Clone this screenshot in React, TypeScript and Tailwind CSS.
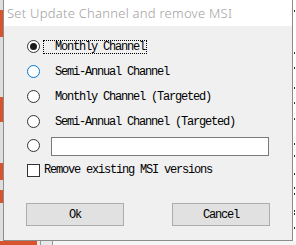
import React from "react";

const mono = { fontFamily: '"Liberation Mono", "Courier New", monospace' };

function Radio({ selected, hover }: { selected?: boolean; hover?: boolean }) {
  return (
    <div
      className={`w-[13px] h-[13px] rounded-full border bg-white flex items-center justify-center shrink-0 ${
        hover ? "border-[#0078d7]" : "border-[#333333]"
      }`}
    >
      {selected && <div className="w-[7px] h-[7px] rounded-full bg-[#1a1a1a]" />}
    </div>
  );
}

function RadioRow({ label, selected, hover, focused }: { label: string; selected?: boolean; hover?: boolean; focused?: boolean }) {
  return (
    <div className="h-[25px] flex items-center pl-[23px]">
      <Radio selected={selected} hover={hover} />
      <div
        className={`ml-[3px] h-[14px] flex items-center pl-[11px] pr-[1px] ${
          focused ? "border border-dotted border-black" : "border border-transparent"
        }`}
      >
        <span className="text-[12px] tracking-[-1.2px] text-black leading-none whitespace-pre" style={mono}>
          {label}
        </span>
      </div>
    </div>
  );
}

export default function App() {
  const dotsRight = [10, 52, 67, 87, 102, 118, 143, 155, 173, 187, 193, 210, 213, 227];
  return (
    <div className="w-[296px] h-[245px] bg-white flex flex-col overflow-hidden">
      <div className="flex h-[241px]">
        {/* left strip */}
        <div className="w-[3px] flex flex-col bg-[#dedede]">
          <div className="h-[10px]" />
          <div className="h-[27px] bg-[#d9532c]" />
          <div className="h-[60px]" />
          <div className="h-[25px] bg-[#d9532c]" />
          <div className="h-[41px]" />
          <div className="h-[17px] bg-[#d9532c]" />
          <div className="h-[10px]" />
          <div className="h-[13px] bg-[#d9532c]" />
        </div>
        {/* window */}
        <div className="w-[290px] h-[241px] border-l border-r border-b border-[#8c8c8c] flex flex-col bg-[#f0f0f0]">
          <div className="h-[26px] bg-white flex items-center pl-[3px]">
            <span
              className="text-[13px] font-light tracking-[0.25px] text-[#a0a0a0] leading-none"
              style={{ fontFamily: '"Noto Sans", "Open Sans", sans-serif' }}
            >
              Set Update Channel and remove MSI
            </span>
          </div>
          <div className="flex flex-col pt-[8px]">
            <RadioRow label="Monthly Channel" selected focused />
            <RadioRow label="Semi-Annual Channel" hover />
            <RadioRow label="Monthly Channel (Targeted)" />
            <RadioRow label="Semi-Annual Channel (Targeted)" />
            <div className="h-[25px] flex items-center pl-[23px]">
              <div className="-mt-[3px]">
                <Radio />
              </div>
              <div className="ml-[11px] w-[218px] h-[19px] -mt-[1px] bg-white border border-[#7a7a7a]" />
            </div>
            <div className="h-[22px] flex items-center pl-[23px]">
              <div className="w-[13px] h-[13px] bg-white border border-[#333333] shrink-0" />
              <span className="ml-[4px] text-[12px] tracking-[-1.2px] text-black leading-none whitespace-pre" style={mono}>
                Remove existing MSI versions
              </span>
            </div>
            <div className="mt-[22px] flex">
              <button
                className="ml-[22px] w-[98px] h-[23px] bg-[#e1e1e1] border border-[#adadad] flex items-center justify-center text-[12px] tracking-[-1.2px] text-black"
                style={mono}
              >
                Ok
              </button>
              <button
                className="ml-[48px] w-[98px] h-[23px] bg-[#e1e1e1] border border-[#adadad] flex items-center justify-center text-[12px] tracking-[-1.2px] text-black"
                style={mono}
              >
                Cancel
              </button>
            </div>
          </div>
        </div>
        {/* right strip */}
        <div className="w-[3px] flex flex-col bg-white pl-[1px]">
          {dotsRight.map((y, i) => (
            <div
              key={i}
              className="w-[1px] h-[2px] bg-[#333333]"
              style={{ marginTop: i === 0 ? y : y - dotsRight[i - 1] - 2 }}
            />
          ))}
        </div>
      </div>
      <div className="h-[4px] flex">
        <div className="w-[37px] bg-[#d9532c]" />
        <div className="w-[3px] bg-[#e8e8e8]" />
        <div className="w-[1px] bg-[#999999]" />
        <div className="w-[11px] bg-[#e8e8e8]" />
        <div className="w-[1px] bg-[#999999]" />
        <div className="flex-1 bg-[#f4f4f4]" />
      </div>
    </div>
  );
}
